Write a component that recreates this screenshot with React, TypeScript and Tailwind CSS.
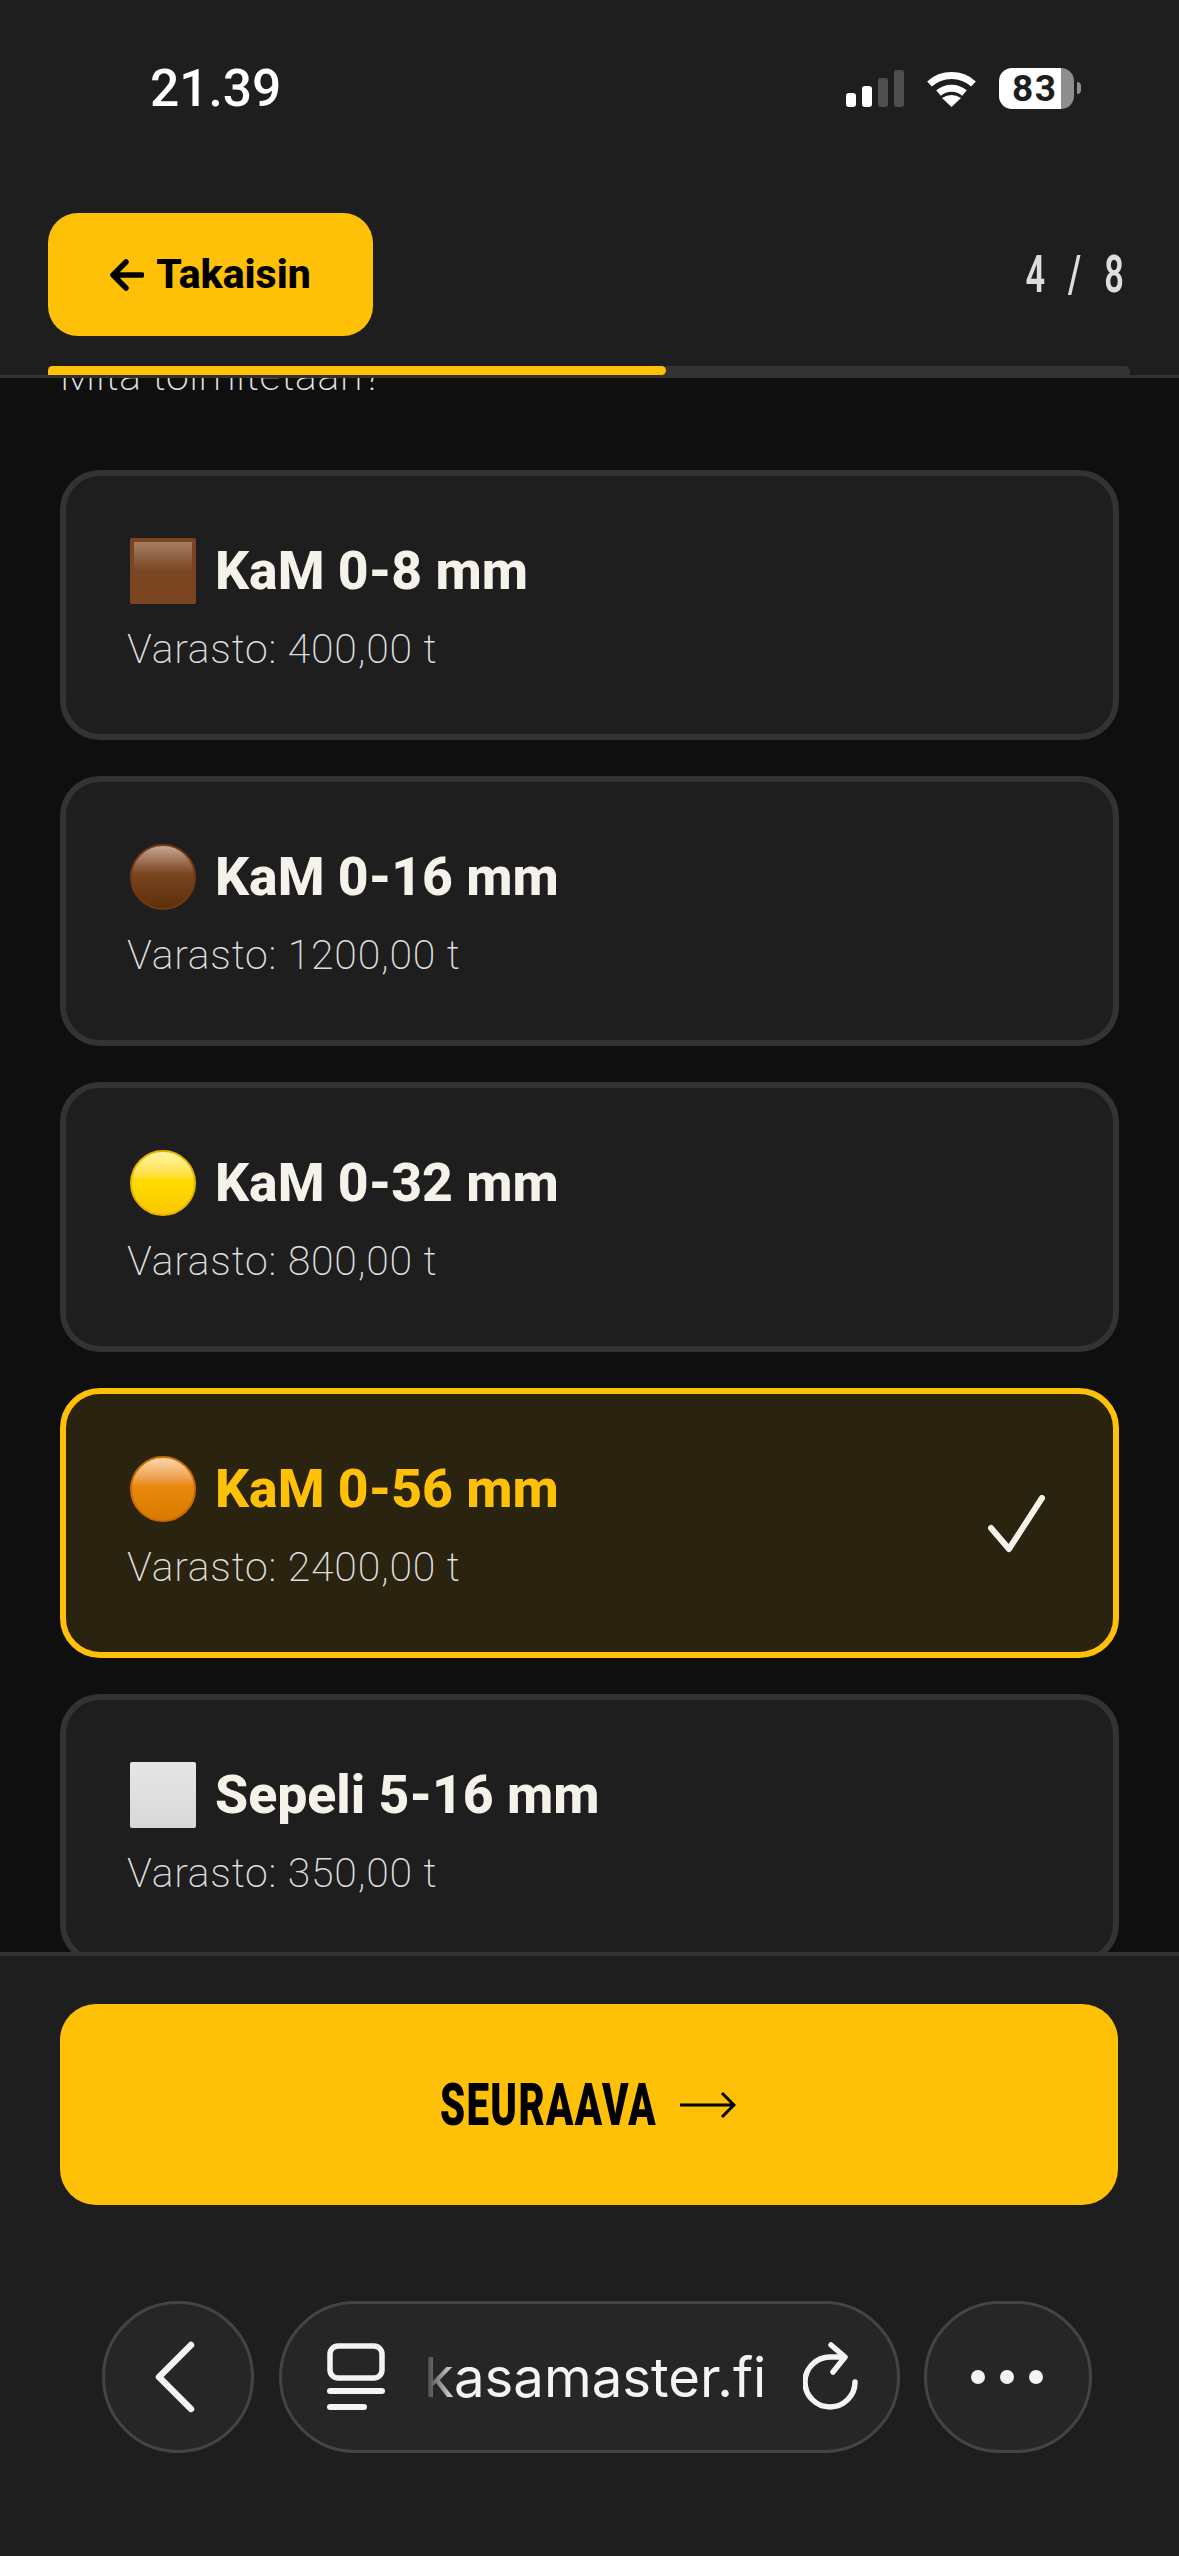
import React from "react";

const sans = "font-['Roboto',sans-serif]";

const materials = [
  { id: "kam8", name: "KaM 0-8 mm", stock: "400,00", icon: "square-brown" },
  { id: "kam16", name: "KaM 0-16 mm", stock: "1200,00", icon: "circle-brown" },
  { id: "kam32", name: "KaM 0-32 mm", stock: "800,00", icon: "circle-yellow" },
  { id: "kam56", name: "KaM 0-56 mm", stock: "2400,00", icon: "circle-orange", selected: true },
  { id: "sepeli", name: "Sepeli 5-16 mm", stock: "350,00", icon: "square-white" },
];

function MaterialIcon({ type }: { type: string }) {
  if (type === "square-brown")
    return <div className="w-[66px] h-[66px] shrink-0 rounded-[2px] border-[4px] border-[#7a4520] bg-linear-to-b from-[#a67f66] via-[#7a4722] via-50% to-[#7a4520]" />;
  if (type === "circle-brown")
    return <div className="w-[66px] h-[66px] shrink-0 rounded-full border-[2px] border-[#6f3a14] bg-linear-to-b from-[#c9a894] via-[#7a4420] via-45% to-[#5f2f0c]" />;
  if (type === "circle-yellow")
    return <div className="w-[66px] h-[66px] shrink-0 rounded-full border-[2px] border-[#e3b400] bg-linear-to-b from-[#fff3a0] via-[#ffdc00] via-45% to-[#f9c800]" />;
  if (type === "circle-orange")
    return <div className="w-[66px] h-[66px] shrink-0 rounded-full border-[2px] border-[#c96c00] bg-linear-to-b from-[#f8d6a8] via-[#ea8a0c] via-45% to-[#d87a00]" />;
  return <div className="w-[66px] h-[66px] shrink-0 rounded-[2px] bg-linear-to-b from-[#e6e6e6] to-[#d8d8d8]" />;
}

function MaterialCard({ item }: { item: (typeof materials)[number] }) {
  return (
    <div
      className={
        item.selected
          ? "h-[270px] shrink-0 rounded-[40px] border-[6px] border-[#ffc107] bg-[#2a2310] pl-[61px] pr-[67px] flex items-center justify-between"
          : "h-[270px] shrink-0 rounded-[40px] border-[6px] border-[#333333] bg-[#1e1e1e] pl-[61px] pr-[67px] flex items-center justify-between"
      }
    >
      <div className="flex flex-col">
        <div className="flex items-center gap-[19px] pl-[3px]">
          <MaterialIcon type={item.icon} />
          <span
            className={
              item.selected
                ? "text-[53.5px] leading-[66px] font-extrabold text-[#ffc107] " + sans
                : "text-[53.5px] leading-[66px] font-extrabold text-[#f5f2ea] " + sans
            }
          >
            {item.name}
          </span>
        </div>
        <div className={"mt-[21px] text-[41px] leading-[48px] tracking-[0.75px] font-extralight text-[#dedede] " + sans}>
          Varasto: {item.stock} t
        </div>
      </div>
      {item.selected && (
        <svg width="58" height="58" viewBox="0 0 58 58" fill="none" className="mt-[2px]">
          <path d="M3 33 L21 54 L54 3" stroke="#f5f2ea" strokeWidth="6" strokeLinecap="round" strokeLinejoin="round" />
        </svg>
      )}
    </div>
  );
}

function StatusBar() {
  return (
    <div className="h-[176px] flex items-center pl-[150px] pr-[98px] justify-between">
      <span className={"mt-[2px] text-[51.5px] font-medium text-white leading-none " + sans}>21.39</span>
      <div className="flex items-center">
        <svg width="58" height="37" viewBox="0 0 58 37" className="mr-[22px]">
          <rect x="0" y="23" width="10" height="14" rx="3" fill="#fff" />
          <rect x="16" y="16" width="10" height="21" rx="3" fill="#fff" />
          <rect x="32" y="8" width="10" height="29" rx="3" fill="#4f4f4f" />
          <rect x="48" y="0" width="10" height="37" rx="3" fill="#4f4f4f" />
        </svg>
        <svg width="51" height="37" viewBox="0 0 51 37" fill="none" className="mr-[22px]">
          <path d="M3.5 14 A33 33 0 0 1 47.5 14" stroke="#fff" strokeWidth="7" />
          <path d="M12.5 23 A20 20 0 0 1 38.5 23" stroke="#fff" strokeWidth="7" />
          <path d="M25.5 37 L16 28 Q25.5 22 35 28 Z" fill="#fff" />
        </svg>
        <div className="relative w-[75px] h-[41px] rounded-[13px] bg-linear-to-r from-white from-[83%] to-[#8e8e8e] to-[83%] flex items-center pl-[13px]">
          <span className={"text-[37px] tracking-[1.5px] font-bold text-[#1e1e1e] leading-none " + sans}>83</span>
        </div>
        <div className="ml-[3px] w-[4px] h-[12px] rounded-r-full bg-[#8e8e8e]" />
      </div>
    </div>
  );
}

function Header() {
  return (
    <header className="bg-[#1e1e1e] border-b-[3px] border-[#333333] shrink-0">
      <StatusBar />
      <div className="mt-[37px] pl-[48px] pr-[54px] flex items-center justify-between">
        <button className="w-[325px] h-[123px] rounded-[30px] bg-[#ffc107] flex items-center justify-center gap-[12px]">
          <svg width="34" height="32" viewBox="0 0 34 32" fill="none">
            <path d="M16 3 L3 16 L16 29 M4 16 H32" stroke="#000" strokeWidth="5.5" strokeLinecap="round" strokeLinejoin="round" />
          </svg>
          <span className={"text-[41px] font-extrabold text-black leading-none " + sans}>Takaisin</span>
        </button>
        <span className={"inline-block origin-right scale-x-[0.66] whitespace-pre text-[52px] font-semibold text-[#dddddd] tracking-[11px] -mr-[6px] leading-none " + sans}>
          4 / 8
        </span>
      </div>
      <div className="mt-[30px] mx-[48px] w-[1082px] h-[9px] rounded-t-[5px] bg-[#333333]">
        <div className="w-[618px] h-[9px] rounded-r-[5px] rounded-tl-[5px] bg-[#ffc107]" />
      </div>
    </header>
  );
}

function BrowserBar() {
  return (
    <div className="mt-[96px] pl-[102px] flex items-center">
      <div className="w-[152px] h-[152px] rounded-full bg-[#262626] border-[3px] border-[#444444] flex items-center justify-center">
        <svg width="44" height="72" viewBox="0 0 44 72" fill="none" className="-ml-[6px]">
          <path d="M38 4 L6 36 L38 68" stroke="#f4f4f4" strokeWidth="6.5" strokeLinecap="round" strokeLinejoin="round" />
        </svg>
      </div>
      <div className="ml-[25px] w-[621px] h-[152px] rounded-full bg-[#262626] border-[3px] border-[#444444] flex items-center pl-[45px]">
        <svg width="58" height="68" viewBox="0 0 58 68" fill="none">
          <rect x="3" y="3" width="52" height="32" rx="8" stroke="#f4f4f4" strokeWidth="5.5" />
          <rect x="0" y="45" width="58" height="6" rx="3" fill="#f4f4f4" />
          <rect x="0" y="61" width="40" height="6" rx="3" fill="#f4f4f4" />
        </svg>
        <span className="ml-[39px] text-[54.5px] leading-none text-[#f4f4f4] font-['Inter',sans-serif]">
          <span className="bg-linear-to-r from-[#3a3a3a] to-[#e4e4e4] bg-clip-text text-transparent">k</span>
          asamaster.fi
        </span>
        <svg width="58" height="70" viewBox="0 0 58 70" fill="none" className="ml-[37px]">
          <path d="M52 40 A25 25 0 1 1 27 15 H40" stroke="#f4f4f4" strokeWidth="5.5" strokeLinecap="round" />
          <path d="M28 3 L42 15 L30 30" stroke="#f4f4f4" strokeWidth="5.5" strokeLinecap="round" strokeLinejoin="round" />
        </svg>
      </div>
      <div className="ml-[24px] w-[168px] h-[152px] rounded-full bg-[#262626] border-[3px] border-[#444444] flex items-center justify-center gap-[15px] pr-[2px]">
        <div className="w-[14px] h-[14px] rounded-full bg-[#f4f4f4]" />
        <div className="w-[14px] h-[14px] rounded-full bg-[#f4f4f4]" />
        <div className="w-[14px] h-[14px] rounded-full bg-[#f4f4f4]" />
      </div>
    </div>
  );
}

export default function App() {
  return (
    <div className="w-[1179px] h-[2556px] flex flex-col bg-[#0f0f0f] overflow-hidden">
      <Header />
      <main className="flex-1 min-h-0 overflow-hidden px-[60px]">
        <div className="flex flex-col gap-[36px]">
          <h2 className={"-mt-[26px] h-[82px] text-[41px] leading-[48px] tracking-[0.75px] font-extralight text-[#e4e4e4] " + sans}>Mitä toimitetaan?</h2>
          {materials.map((m) => (
            <MaterialCard key={m.id} item={m} />
          ))}
        </div>
      </main>
      <footer className="h-[604px] shrink-0 bg-[#1e1e1e] border-t-[4px] border-[#333333]">
        <button className="mt-[48px] ml-[60px] w-[1058px] h-[201px] rounded-[36px] bg-[#ffc107] flex items-center justify-center pr-[2px]">
          <span className={"inline-block w-[217px] text-left origin-left whitespace-nowrap scale-x-[0.67] tracking-[2px] text-[60px] font-black text-black leading-none " + sans}>SEURAAVA</span>
          <svg width="56" height="28" viewBox="0 0 56 28" fill="none" className="ml-[23px]">
            <path d="M0 14 H54 M42 2 L54 14 L42 26" stroke="#000" strokeWidth="3" />
          </svg>
        </button>
        <BrowserBar />
      </footer>
    </div>
  );
}
